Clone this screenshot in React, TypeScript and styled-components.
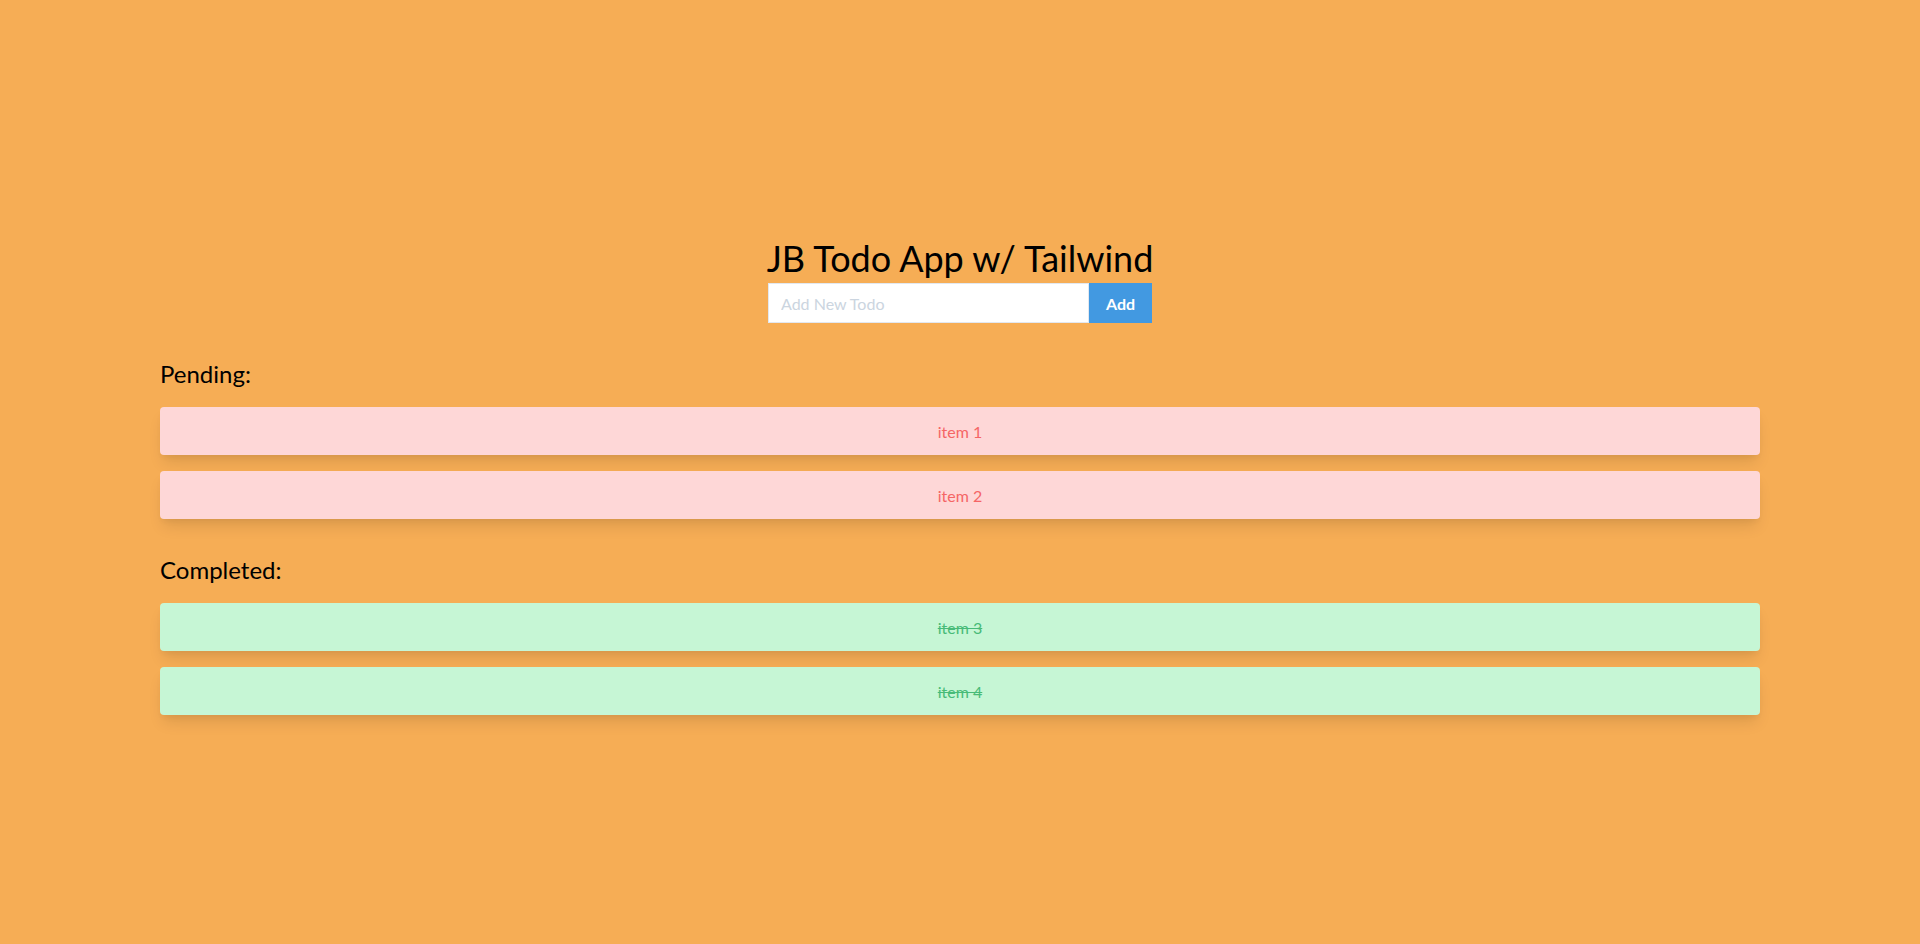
import React from "react";
import styled, { createGlobalStyle } from "styled-components";

const Global = createGlobalStyle`
  html, body { margin: 0; padding: 0; }
  body {
    background: #f6ad55;
    font-family: "Segoe UI", Lato, "Open Sans", sans-serif;
    color: #000;
  }
  * { box-sizing: border-box; }
`;

const Page = styled.main`
  min-height: 944px;
  padding-top: 238px;
`;

const Title = styled.h1`
  margin: 0;
  text-align: center;
  font-size: 36px;
  line-height: 40px;
  font-weight: 400;
`;

const Form = styled.form`
  display: flex;
  width: 384px;
  height: 40px;
  margin: 5px auto 0;
`;

const Input = styled.input`
  flex: 1;
  min-width: 0;
  height: 100%;
  border: 1px solid #e2e8f0;
  padding: 0 12px;
  font-family: inherit;
  font-size: 16px;
  outline: none;
  &::placeholder { color: #cbd5e0; }
`;

const AddButton = styled.button`
  width: 63px;
  height: 100%;
  border: none;
  background: #4299e1;
  color: #fff;
  font-family: inherit;
  font-weight: 700;
  font-size: 16px;
  cursor: pointer;
`;

const Section = styled.section<{ $top: number }>`
  width: 1600px;
  margin: ${(p) => p.$top}px auto 0;
`;

const Label = styled.h2`
  margin: 0 0 17px;
  font-size: 24px;
  line-height: 32px;
  font-weight: 400;
`;

const List = styled.ul`
  list-style: none;
  margin: 0;
  padding: 0;
  display: flex;
  flex-direction: column;
  gap: 16px;
`;

const Item = styled.li<{ $done?: boolean }>`
  height: 48px;
  display: flex;
  align-items: center;
  justify-content: center;
  border-radius: 4px;
  font-size: 16px;
  background: ${(p) => (p.$done ? "#c6f6d5" : "#fed7d7")};
  color: ${(p) => (p.$done ? "#48bb78" : "#f56565")};
  text-decoration: ${(p) => (p.$done ? "line-through" : "none")};
  box-shadow: 0 10px 15px -3px rgba(0, 0, 0, 0.1), 0 4px 6px -2px rgba(0, 0, 0, 0.05);
`;

export default function App() {
  return (
    <>
      <Global />
      <Page>
        <Title>JB Todo App w/ Tailwind</Title>
        <Form onSubmit={(e) => e.preventDefault()}>
          <Input placeholder="Add New Todo" />
          <AddButton type="submit">Add</AddButton>
        </Form>
        <Section $top={35}>
          <Label>Pending:</Label>
          <List>
            <Item>item 1</Item>
            <Item>item 2</Item>
          </List>
        </Section>
        <Section $top={35}>
          <Label>Completed:</Label>
          <List>
            <Item $done>item 3</Item>
            <Item $done>item 4</Item>
          </List>
        </Section>
      </Page>
    </>
  );
}
